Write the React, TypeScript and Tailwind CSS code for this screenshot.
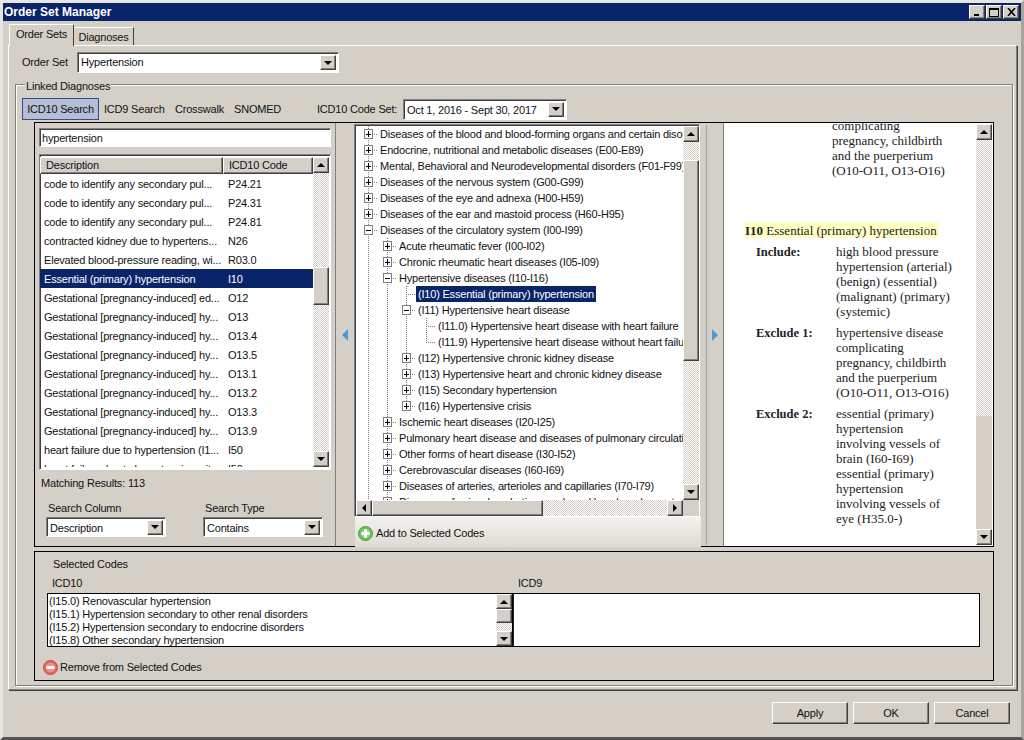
import React from "react";

const raised = "border border-t-white border-l-white border-r-[#404040] border-b-[#404040] shadow-[inset_-1px_-1px_0_#808080]";
const sunken = "border border-t-[#808080] border-l-[#808080] border-r-white border-b-white shadow-[inset_1px_1px_0_#404040]";
const dither = "bg-[repeating-conic-gradient(#d4d0c8_0_25%,#ffffff_0_50%)] bg-[length:2px_2px]";

function Arrow({ dir }: { dir: "up" | "down" | "left" | "right" }) {
  const pts = { up: "4,1 0,5 8,5", down: "0,1 8,1 4,5", left: "5,0 5,8 1,4", right: "1,0 1,8 5,4" }[dir];
  const horiz = dir === "left" || dir === "right";
  return (
    <svg width={horiz ? 6 : 8} height={horiz ? 8 : 6} viewBox={horiz ? "0 0 6 8" : "0 0 8 6"}>
      <polygon points={pts} fill="#000" />
    </svg>
  );
}

function SBtn({ dir, className = "h-4 w-4" }: { dir: "up" | "down" | "left" | "right"; className?: string }) {
  return (
    <div className={`${raised} ${className} shrink-0 bg-[#d4d0c8] flex items-center justify-center`}>
      <Arrow dir={dir} />
    </div>
  );
}

function VScroll({ before, thumb, className = "w-4" }: { before: number; thumb: number; className?: string }) {
  return (
    <div className={`${className} shrink-0 flex flex-col h-full`}>
      <SBtn dir="up" />
      <div className={`shrink-0 ${dither}`} style={{ height: before }} />
      <div className={`${raised} shrink-0 bg-[#d4d0c8]`} style={{ height: thumb }} />
      <div className={`flex-1 ${dither}`} />
      <SBtn dir="down" />
    </div>
  );
}

function Combo({ value, className, textClass = "pt-[3px]" }: { value: string; className: string; textClass?: string }) {
  return (
    <div className={`${sunken} ${className} bg-white flex items-center pl-[3px] pr-[2px]`}>
      <span className={`flex-1 whitespace-nowrap overflow-hidden ${textClass}`}>{value}</span>
      <SBtn dir="down" className="w-4 h-[15px]" />
    </div>
  );
}

type Row = {
  level: number;
  text: string;
  toggle?: "+" | "-";
  guides: number[];
  end?: boolean;
  selected?: boolean;
};

const X = [12, 31, 50, 70];

const l0 = [0];
const l1 = [0, 1];
const l2 = [0, 1, 2];
const l3 = [0, 1, 2, 3];

const treeRows: Row[] = [
  { level: 0, text: "Diseases of the blood and blood-forming organs and certain disorders", toggle: "+", guides: l0 },
  { level: 0, text: "Endocrine, nutritional and metabolic diseases (E00-E89)", toggle: "+", guides: l0 },
  { level: 0, text: "Mental, Behavioral and Neurodevelopmental disorders (F01-F99)", toggle: "+", guides: l0 },
  { level: 0, text: "Diseases of the nervous system (G00-G99)", toggle: "+", guides: l0 },
  { level: 0, text: "Diseases of the eye and adnexa (H00-H59)", toggle: "+", guides: l0 },
  { level: 0, text: "Diseases of the ear and mastoid process (H60-H95)", toggle: "+", guides: l0 },
  { level: 0, text: "Diseases of the circulatory system (I00-I99)", toggle: "-", guides: l0 },
  { level: 1, text: "Acute rheumatic fever (I00-I02)", toggle: "+", guides: l1 },
  { level: 1, text: "Chronic rheumatic heart diseases (I05-I09)", toggle: "+", guides: l1 },
  { level: 1, text: "Hypertensive diseases (I10-I16)", toggle: "-", guides: l1 },
  { level: 2, text: "(I10) Essential (primary) hypertension", guides: l2, selected: true },
  { level: 2, text: "(I11) Hypertensive heart disease", toggle: "-", guides: l2 },
  { level: 3, text: "(I11.0) Hypertensive heart disease with heart failure", guides: l3 },
  { level: 3, text: "(I11.9) Hypertensive heart disease without heart failure", guides: l3, end: true },
  { level: 2, text: "(I12) Hypertensive chronic kidney disease", toggle: "+", guides: l2 },
  { level: 2, text: "(I13) Hypertensive heart and chronic kidney disease", toggle: "+", guides: l2 },
  { level: 2, text: "(I15) Secondary hypertension", toggle: "+", guides: l2 },
  { level: 2, text: "(I16) Hypertensive crisis", toggle: "+", guides: l2, end: true },
  { level: 1, text: "Ischemic heart diseases (I20-I25)", toggle: "+", guides: l1 },
  { level: 1, text: "Pulmonary heart disease and diseases of pulmonary circulation (I26-I28)", toggle: "+", guides: l1 },
  { level: 1, text: "Other forms of heart disease (I30-I52)", toggle: "+", guides: l1 },
  { level: 1, text: "Cerebrovascular diseases (I60-I69)", toggle: "+", guides: l1 },
  { level: 1, text: "Diseases of arteries, arterioles and capillaries (I70-I79)", toggle: "+", guides: l1 },
  { level: 1, text: "Diseases of veins, lymphatic vessels and lymph nodes, not elsewhere", toggle: "+", guides: l1 },
];

function Gutter({ row }: { row: Row }) {
  const cx = X[row.level];
  const width = cx + 10;
  const dot = { stroke: "#808080", strokeDasharray: "1 1", strokeWidth: 1 };
  return (
    <svg width={width} height={16} className="shrink-0">
      {row.guides.map((g) => {
        const own = g === row.level;
        const bottom = own && row.end ? 8 : 16;
        return <line key={g} x1={X[g] + 0.5} x2={X[g] + 0.5} y1={0} y2={bottom} {...dot} />;
      })}
      <line x1={cx} x2={cx + 9} y1={8.5} y2={8.5} {...dot} />
      {row.toggle && (
        <g>
          <rect x={cx - 3.5} y={3.5} width={8} height={9} fill="#fff" stroke="#808080" />
          <line x1={cx - 2} x2={cx + 3} y1={8.5} y2={8.5} stroke="#000" />
          {row.toggle === "+" && <line x1={cx + 0.5} x2={cx + 0.5} y1={5} y2={11} stroke="#000" />}
        </g>
      )}
    </svg>
  );
}

const tableRows: [string, string][] = [
  ["code to identify any secondary pul...", "P24.21"],
  ["code to identify any secondary pul...", "P24.31"],
  ["code to identify any secondary pul...", "P24.81"],
  ["contracted kidney due to hypertens...", "N26"],
  ["Elevated blood-pressure reading, wi...", "R03.0"],
  ["Essential (primary) hypertension", "I10"],
  ["Gestational [pregnancy-induced] ed...", "O12"],
  ["Gestational [pregnancy-induced] hy...", "O13"],
  ["Gestational [pregnancy-induced] hy...", "O13.4"],
  ["Gestational [pregnancy-induced] hy...", "O13.5"],
  ["Gestational [pregnancy-induced] hy...", "O13.1"],
  ["Gestational [pregnancy-induced] hy...", "O13.2"],
  ["Gestational [pregnancy-induced] hy...", "O13.3"],
  ["Gestational [pregnancy-induced] hy...", "O13.9"],
  ["heart failure due to hypertension (I1...", "I50"],
  ["heart failure due to hypertension wit...", "I50"],
];

function Def({ label, lines, className = "" }: { label: string; lines: string[]; className?: string }) {
  return (
    <div className={`flex ${className}`}>
      <div className="w-[80px] shrink-0 font-bold text-[12.5px]">{label}</div>
      <div className="-mt-[1px]">
        {lines.map((l, i) => (
          <div key={i}>{l}</div>
        ))}
      </div>
    </div>
  );
}

function WinBtn({ children }: { children: React.ReactNode }) {
  return (
    <div className={`${raised} w-4 h-[14px] bg-[#d4d0c8] flex items-center justify-center`}>{children}</div>
  );
}

function Btn({ label }: { label: string }) {
  return (
    <div className={`${raised} w-[76px] h-[22px] flex items-center justify-center bg-[#d4d0c8]`}>{label}</div>
  );
}

function RoundIcon({ kind }: { kind: "add" | "remove" }) {
  const add = kind === "add";
  return (
    <svg width={15} height={15} viewBox="0 0 15 15" className="shrink-0">
      <circle cx={7.5} cy={7.5} r={7} fill={add ? "#6cbf62" : "#e8675c"} stroke={add ? "#4c9f46" : "#c8483e"} />
      <circle cx={7.5} cy={7.5} r={4.8} fill={add ? "#8fd386" : "#f09088"} />
      <rect x={3.5} y={6} width={8} height={3} fill="#fff" />
      {add && <rect x={6} y={3.5} width={3} height={8} fill="#fff" />}
    </svg>
  );
}

export default function App() {
  return (
    <div className="w-[1024px] h-[740px] overflow-hidden bg-[#d4d0c8] text-[11px] leading-none tracking-[-0.2px] text-[#111] [font-family:'Liberation_Sans',sans-serif] border-l-[3px] border-r-[3px] border-t-[3px] border-b-[3px] border-t-[#e8e6e0] border-l-[#e8e6e0] border-r-[#a8a49c] border-b-[#55534f] flex flex-col">
      {/* title bar */}
      <div className="h-[18px] shrink-0 bg-[#0a246a] flex items-center justify-between pl-[1px] pr-[2px]">
        <span className="text-white font-bold text-[12px] tracking-normal">Order Set Manager</span>
        <div className="flex gap-[1px]">
          <WinBtn>
            <svg width="8" height="8"><rect x="1" y="6" width="5" height="2" fill="#000" /></svg>
          </WinBtn>
          <WinBtn>
            <svg width="10" height="9"><rect x="0.5" y="0.5" width="9" height="8" fill="none" stroke="#000" /><rect x="0" y="0" width="10" height="2" fill="#000" /></svg>
          </WinBtn>
          <WinBtn>
            <svg width="9" height="8"><path d="M1 0 L8 8 M8 0 L1 8" stroke="#000" strokeWidth="1.6" /></svg>
          </WinBtn>
        </div>
      </div>

      {/* tabs */}
      <div className="h-[24px] shrink-0 flex items-end pl-[6px] relative z-10">
        <div className="w-[65px] h-[22px] bg-[#d4d0c8] border-t border-l border-t-white border-l-white border-r border-r-[#404040] rounded-t-[2px] flex items-center justify-center -mb-[1px] pb-[3px]">
          Order Sets
        </div>
        <div className="w-[60px] h-[18px] bg-[#d4d0c8] border-t border-r border-t-white border-r-[#404040] flex items-center justify-center pt-[1px]">
          Diagnoses
        </div>
      </div>

      {/* tab page */}
      <div className="ml-[5px] w-[1009px] h-[645px] shrink-0 border border-t-white border-l-white border-r-[#808080] border-b-[#808080] shadow-[1px_1px_0_#404040] flex flex-col">
        <div className="flex items-center h-[21px] mt-[6px] shrink-0">
          <span className="ml-[13px] w-[55px]">Order Set</span>
          <Combo value="Hypertension" className="w-[262px] h-[21px]" textClass="" />
        </div>

        {/* group box */}
        <div className="relative ml-[6px] mt-[11px] w-[998px] h-[602px] shrink-0 border border-[#808080] shadow-[inset_1px_1px_0_#fff,1px_1px_0_#fff] flex flex-col">
          <span className="absolute left-[9px] -top-[4px] px-[1px] bg-[#d4d0c8]">Linked Diagnoses</span>

          {/* sub tabs */}
          <div className="flex items-center h-[22px] mt-[13px] ml-[6px] shrink-0">
            <div className="w-[77px] h-[22px] bg-[#b6bed6] border border-[#2f4f86] flex items-center justify-center pt-[1px]">ICD10 Search</div>
            <span className="ml-[5px] w-[71px] pt-[1px]">ICD9 Search</span>
            <span className="w-[59px] pt-[1px]">Crosswalk</span>
            <span className="w-[83px] pt-[1px]">SNOMED</span>
            <span className="w-[86px] pt-[1px]">ICD10 Code Set:</span>
            <Combo value="Oct 1, 2016 - Sept 30, 2017" className="w-[164px] h-[21px]" />
          </div>

          {/* three panes */}
          <div className="ml-[18px] mt-[2px] w-[960px] h-[425px] shrink-0 border border-black flex">
            {/* left pane */}
            <div className="w-[301px] shrink-0 border-r border-[#808080] flex flex-col pl-[4px]">
              <div className={`${sunken} bg-white w-[292px] h-[19px] mt-[5px] shrink-0 flex items-center pl-[2px] pt-[1px]`}>hypertension</div>
              <div className={`${sunken} w-[292px] h-[316px] mt-[7px] shrink-0 bg-white flex py-[2px] pl-[0px] pr-[1px]`}>
                <div className="flex-1 flex flex-col overflow-hidden min-w-0">
                  <div className="flex h-[17px] shrink-0 bg-[#d4d0c8]">
                    <div className={`${raised} w-[183px] flex items-center pl-[5px]`}>Description</div>
                    <div className={`${raised} flex-1 flex items-center pl-[5px]`}>ICD10 Code</div>
                  </div>
                  {tableRows.map(([d, c], i) => {
                    const sel = i === 5;
                    return (
                      <div key={i} className={`flex h-[19px] shrink-0 items-center pt-[1px] ${sel ? "bg-[#0a246a] text-white" : ""}`}>
                        <span className="w-[184px] pl-[4px] whitespace-nowrap overflow-hidden">{d}</span>
                        <span className="pl-[4px]">{c}</span>
                      </div>
                    );
                  })}
                </div>
                <VScroll before={94} thumb={38} />
              </div>
              <div className="mt-[7px] ml-[2px] h-[12px] shrink-0 flex items-center">Matching Results: 113</div>
              <div className="flex mt-[13px] ml-[7px] shrink-0">
                <div className="w-[157px] flex flex-col">
                  <span className="ml-[2px] h-[15px] pt-[1px]">Search Column</span>
                  <Combo value="Description" className="w-[120px] h-[20px]" />
                </div>
                <div className="flex flex-col">
                  <span className="ml-[2px] h-[15px] pt-[1px]">Search Type</span>
                  <Combo value="Contains" className="w-[120px] h-[20px]" />
                </div>
              </div>
            </div>

            {/* splitter */}
            <div className="w-[18px] shrink-0 flex items-center justify-center pb-[1px] pt-[2px]">
              <svg width="7" height="12" viewBox="0 0 7 12"><polygon points="6,0 6,12 0,6" fill="#4a9ad8" /></svg>
            </div>

            {/* centre */}
            <div className="w-[347px] shrink-0 flex flex-col pt-[1px]">
              <div className={`${sunken} w-[346px] h-[393px] shrink-0 bg-white flex flex-col pl-[1px] pt-[1px]`}>
                <div className="flex h-[374px] shrink-0">
                  <div className="flex-1 min-w-0 overflow-hidden flex flex-col">
                    {treeRows.map((r, i) => (
                      <div key={i} className="flex h-4 shrink-0 items-center whitespace-nowrap">
                        <Gutter row={r} />
                        <span className={`${r.selected ? "bg-[#0a246a] text-white" : ""} px-[2px] h-4 flex items-center`}>{r.text}</span>
                      </div>
                    ))}
                  </div>
                  <VScroll before={18} thumb={201} />
                </div>
                <div className="flex h-4 shrink-0">
                  <SBtn dir="left" />
                  <div className={`${raised} w-[171px] bg-[#d4d0c8]`} />
                  <div className={`flex-1 ${dither}`} />
                  <SBtn dir="right" />
                  <div className="w-4 bg-[#d4d0c8]" />
                </div>
              </div>
              <div className="h-[30px] shrink-0 ml-[1px] flex items-center gap-[3px] pl-[3px] pt-[3px] bg-gradient-to-b from-[#f4f2ee] to-[#dedbd3]">
                <RoundIcon kind="add" />
                <span>Add to Selected Codes</span>
              </div>
            </div>

            {/* splitter */}
            <div className="w-[23px] shrink-0 flex items-center pb-[1px] pt-[2px] border-r border-[#808080]">
              <div className="ml-[5px] h-full border-l border-[#a0a0a0] flex items-center pl-[5px]">
                <svg width="7" height="12" viewBox="0 0 7 12"><polygon points="0,0 0,12 6,6" fill="#4a9ad8" /></svg>
              </div>
            </div>

            {/* right pane */}
            <div className="flex-1 min-w-0 bg-white flex">
              <div className="flex-1 min-w-0 overflow-hidden [font-family:'Liberation_Serif',serif] text-[13px] tracking-normal leading-[15px] text-[#222]">
                <div className="-mt-[5px] ml-[108px]">
                  <div>complicating</div>
                  <div>pregnancy, childbirth</div>
                  <div>and the puerperium</div>
                  <div>(O10-O11, O13-O16)</div>
                </div>
                <div className="ml-[21px] mt-[44px] w-[194px] h-[16px] bg-[#ffffc4] flex items-center whitespace-nowrap">
                  <b>I10</b>&nbsp;Essential (primary) hypertension
                </div>
                <div className="ml-[32px] mt-[7px]">
                  <Def label="Include:" lines={["high blood pressure", "hypertension (arterial)", "(benign) (essential)", "(malignant) (primary)", "(systemic)"]} />
                  <Def className="mt-[7px]" label="Exclude 1:" lines={["hypertensive disease", "complicating", "pregnancy, childbirth", "and the puerperium", "(O10-O11, O13-O16)"]} />
                  <Def className="mt-[7px]" label="Exclude 2:" lines={["essential (primary)", "hypertension", "involving vessels of", "brain (I60-I69)", "essential (primary)", "hypertension", "involving vessels of", "eye (H35.0-)"]} />
                </div>
              </div>
              <div className="w-4 mr-[1px] shrink-0 flex flex-col py-[1px]">
                <SBtn dir="up" />
                <div className={`h-[276px] shrink-0 ${dither}`} />
                <div className="flex-1 bg-[#d4d0c8]" />
                <SBtn dir="down" />
              </div>
            </div>
          </div>

          {/* selected codes */}
          <div className="ml-[18px] mt-[4px] w-[960px] h-[130px] shrink-0 border border-black flex flex-col">
            <span className="ml-[18px] mt-[6px] h-[12px] flex items-center shrink-0">Selected Codes</span>
            <div className="flex mt-[7px] h-[12px] items-center shrink-0">
              <span className="ml-[17px] w-[466px]">ICD10</span>
              <span>ICD9</span>
            </div>
            <div className="flex mt-[4px] ml-[12px] h-[54px] shrink-0">
              <div className="w-[466px] border border-black bg-white flex">
                <div className="flex-1 pl-[1px] pt-[1px] leading-[13px] overflow-hidden whitespace-nowrap">
                  <div>(I15.0) Renovascular hypertension</div>
                  <div>(I15.1) Hypertension secondary to other renal disorders</div>
                  <div>(I15.2) Hypertension secondary to endocrine disorders</div>
                  <div>(I15.8) Other secondary hypertension</div>
                </div>
                <div className="w-4 flex flex-col">
                  <SBtn dir="up" className="h-[15px] w-4" />
                  <div className={`${raised} h-[14px] bg-[#d4d0c8] shrink-0`} />
                  <div className={`flex-1 ${dither}`} />
                  <SBtn dir="down" className="h-[15px] w-4" />
                </div>
              </div>
              <div className="w-[467px] border border-black border-l-[#222] bg-white" />
            </div>
            <div className="flex items-center gap-[2px] ml-[8px] mt-[13px]">
              <RoundIcon kind="remove" />
              <span>Remove from Selected Codes</span>
            </div>
          </div>
        </div>
      </div>

      {/* bottom buttons */}
      <div className="flex justify-end gap-[5px] mt-[12px] pr-[11px]">
        <Btn label="Apply" />
        <Btn label="OK" />
        <Btn label="Cancel" />
      </div>
    </div>
  );
}
